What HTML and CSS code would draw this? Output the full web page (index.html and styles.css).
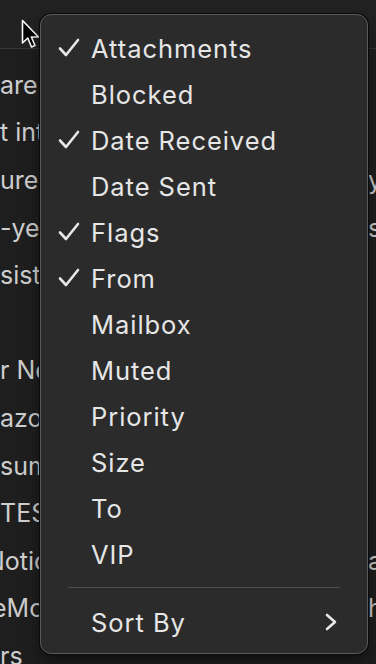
FILE: index.html
```html
<!DOCTYPE html>
<html lang="en">
<head>
<meta charset="utf-8">
<link rel="stylesheet" href="styles.css">
</head>
<body>
<div class="app">
  <div class="toolbar"></div>
  <div class="list">
    <div class="line"><span class="l">are</span><span class="r"></span></div>
    <div class="line"><span class="l">t into</span><span class="r"></span></div>
    <div class="line"><span class="l">ures</span><span class="r">you</span></div>
    <div class="line"><span class="l">-year</span><span class="r">summary</span></div>
    <div class="line"><span class="l">sist</span><span class="r"></span></div>
    <div class="line"><span class="l"></span><span class="r"></span></div>
    <div class="line"><span class="l">r New</span><span class="r"></span></div>
    <div class="line"><span class="l">azon</span><span class="r"></span></div>
    <div class="line"><span class="l">sum</span><span class="r"></span></div>
    <div class="line"><span class="l">TEST</span><span class="r"></span></div>
    <div class="line"><span class="l shift-lg">Notice</span><span class="r">available</span></div>
    <div class="line"><span class="l shift">eMode</span><span class="r">here</span></div>
    <div class="line"><span class="l">rs</span><span class="r"></span></div>
  </div>

  <svg class="cursor" width="20" height="32" viewBox="0 0 20 32">
    <path d="M1.5 1.5 L1.5 24 L6.8 19 L10.5 28 L14 26.5 L10.4 18 L17.5 18 Z" fill="#000" stroke="#fff" stroke-width="1.6" stroke-linejoin="round"/>
  </svg>

  <div class="menu">
    <div class="item"><span class="check"><svg viewBox="0 0 22 20" width="22" height="20"><path d="M2 10.5 L8 17 L20 2" fill="none" stroke="#e8e8e8" stroke-width="2.6" stroke-linecap="round" stroke-linejoin="round"/></svg></span><span class="label">Attachments</span></div>
    <div class="item"><span class="check"></span><span class="label">Blocked</span></div>
    <div class="item"><span class="check"><svg viewBox="0 0 22 20" width="22" height="20"><path d="M2 10.5 L8 17 L20 2" fill="none" stroke="#e8e8e8" stroke-width="2.6" stroke-linecap="round" stroke-linejoin="round"/></svg></span><span class="label">Date Received</span></div>
    <div class="item"><span class="check"></span><span class="label">Date Sent</span></div>
    <div class="item"><span class="check"><svg viewBox="0 0 22 20" width="22" height="20"><path d="M2 10.5 L8 17 L20 2" fill="none" stroke="#e8e8e8" stroke-width="2.6" stroke-linecap="round" stroke-linejoin="round"/></svg></span><span class="label">Flags</span></div>
    <div class="item"><span class="check"><svg viewBox="0 0 22 20" width="22" height="20"><path d="M2 10.5 L8 17 L20 2" fill="none" stroke="#e8e8e8" stroke-width="2.6" stroke-linecap="round" stroke-linejoin="round"/></svg></span><span class="label">From</span></div>
    <div class="item"><span class="check"></span><span class="label">Mailbox</span></div>
    <div class="item"><span class="check"></span><span class="label">Muted</span></div>
    <div class="item"><span class="check"></span><span class="label">Priority</span></div>
    <div class="item"><span class="check"></span><span class="label">Size</span></div>
    <div class="item"><span class="check"></span><span class="label">To</span></div>
    <div class="item"><span class="check"></span><span class="label">VIP</span></div>
    <div class="sep"></div>
    <div class="item"><span class="check"></span><span class="label">Sort By</span><svg class="chev" viewBox="0 0 12 18" width="12" height="18"><path d="M2 2 L10 9 L2 16" fill="none" stroke="#e8e8e8" stroke-width="2.6" stroke-linecap="round" stroke-linejoin="round"/></svg></div>
  </div>
</div>
</body>
</html>
```

FILE: styles.css
```css
* { box-sizing: border-box; }
html, body { margin: 0; padding: 0; }
body {
  width: 376px;
  height: 664px;
  overflow: hidden;
  background: #1e1e1e;
  font-family: Inter, "Noto Sans", sans-serif;
}
.app {
  position: relative;
  width: 376px;
  height: 664px;
  overflow: hidden;
}
.toolbar {
  height: 49px;
  background: #222222;
  border-bottom: 1px solid #363636;
}
.list {
  padding-top: 12px;
  display: flex;
  flex-direction: column;
}
.line {
  height: 47.6px;
  display: flex;
  align-items: center;
  font-size: 25px;
  color: #cdcdcd;
}
.line .l {
  width: 80px;
  flex: none;
  overflow: hidden;
  white-space: nowrap;
}
.line .l.shift {
  text-indent: -8px;
}
.line .l.shift-lg {
  text-indent: -14px;
}
.line .r {
  margin-left: 288px;
  white-space: nowrap;
}
.cursor {
  position: absolute;
  left: 21px;
  top: 19px;
}
.menu {
  position: absolute;
  left: 40px;
  top: 14px;
  width: 328px;
  height: 640px;
  background: #2b2b2b;
  border: 1px solid #5a5a5a;
  border-radius: 11px;
  box-shadow: 0 0 0 1px #0a0a0a, 0 6px 16px rgba(0,0,0,0.5);
  padding: 10px 0 0 0;
  display: flex;
  flex-direction: column;
}
.item {
  height: 46px;
  display: flex;
  align-items: center;
  padding-left: 17px;
  padding-right: 30px;
  color: #e6e6e6;
  font-size: 25.5px;
  letter-spacing: 0.95px;
}
.check {
  width: 33px;
  flex: none;
  display: flex;
  align-items: center;
}
.check svg { display: block; }
.label { flex: 1; white-space: nowrap; }
.chev { display: block; flex: none; }
.sep {
  height: 1px;
  background: #505050;
  margin: 10px 27px 11px 27px;
}
```
